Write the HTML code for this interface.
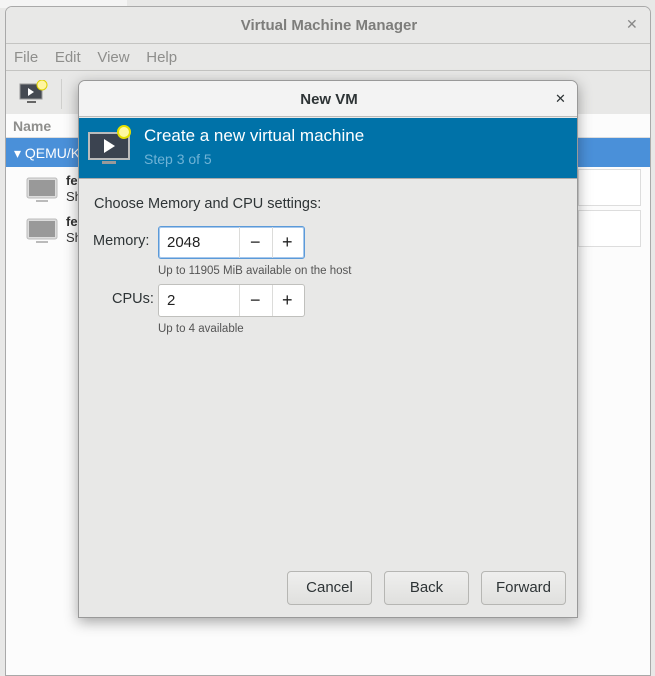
<!DOCTYPE html>
<html><head><style>
*{box-sizing:border-box;margin:0;padding:0}
body{width:655px;height:668px;position:relative;overflow:hidden;background:#e8e8e7;font-family:"Liberation Sans","DejaVu Sans",sans-serif;}
.abs{position:absolute}
#win{left:5px;top:6px;width:646px;height:670px;border:1px solid #a9a9a9;border-radius:7px 7px 0 0;background:#fcfcfc;overflow:hidden}
#dlg{left:78px;top:80px;width:500px;height:538px;background:#e8e8e7;border:1px solid #999;border-radius:7px 7px 0 0;box-shadow:0 4px 14px rgba(0,0,0,.35);overflow:hidden}
.btn{position:absolute;top:490px;width:85px;height:34px;border:1px solid #b6b6b3;border-radius:4px;background:linear-gradient(#efefee,#e0e0de);font-size:15px;color:#2e3436;text-align:center;line-height:32px}
.spin{position:absolute;left:79px;width:147px;height:33px;background:#fff;border:1px solid #c0c0bd;border-radius:3px;font-size:15px;color:#222}
.spin span{position:absolute;top:0;height:31px;line-height:31px}
.sep{position:absolute;top:0;width:1px;height:31px;background:#dcdcda}
</style></head><body>
<div class="abs" style="left:0;top:0;width:127px;height:8px;background:#f4f4f4"></div>
<div id="win" class="abs">
 <div class="abs" style="left:0;top:0;width:646px;height:37px;background:#e8e8e7;border-bottom:1px solid #c4c4c2;text-align:center;font-size:15px;font-weight:bold;color:#7d7d7b;line-height:38px">Virtual Machine Manager</div>
 <div class="abs" style="left:620px;top:9px;font-size:14px;color:#888">✕</div>
 <div class="abs" style="left:0;top:37px;width:646px;height:27px;background:#e8e8e7;border-bottom:1px solid #c4c4c2;font-size:15px;color:#8e8e8c;line-height:27px;padding-left:8px;word-spacing:12.5px">File Edit View Help</div>
 <div class="abs" style="left:0;top:64px;width:646px;height:43px;background:#e8e8e7"></div>
 <div class="abs" style="left:55px;top:72px;width:1px;height:30px;background:#cfcfcd"></div>
 <svg class="abs" style="left:12px;top:73px" width="30" height="28"><rect x="2" y="4" width="22" height="15" fill="#454a52" stroke="#999"/><rect x="9" y="21" width="9" height="2" fill="#666"/><path d="M10 8l6 4-6 4z" fill="#fff"/><circle cx="24" cy="5" r="5" fill="#fff5a0" stroke="#ddd000"/></svg>
 <div class="abs" style="left:0;top:107px;width:646px;height:24px;background:#fcfcfc;border-bottom:1px solid #ddd;font-size:14px;font-weight:bold;color:#8e8e8c;line-height:24px;padding-left:7px">Name</div>
 <div class="abs" style="left:0;top:131px;width:646px;height:29px;background:#4a90d9;color:#fff;font-size:14px;line-height:30px;padding-left:8px">▾ QEMU/KVM</div>
 <svg class="abs" style="left:20px;top:169px" width="34" height="30"><rect x="1" y="2" width="30" height="20" rx="2" fill="#ddd" stroke="#bbb"/><rect x="3" y="4" width="26" height="16" fill="#999"/><rect x="10" y="24" width="12" height="2" fill="#bbb"/></svg>
 <svg class="abs" style="left:20px;top:210px" width="34" height="30"><rect x="1" y="2" width="30" height="20" rx="2" fill="#ddd" stroke="#bbb"/><rect x="3" y="4" width="26" height="16" fill="#999"/><rect x="10" y="24" width="12" height="2" fill="#bbb"/></svg>
 <div class="abs" style="left:60px;top:166px;font-size:13px;line-height:16px;color:#333"><b>fedora</b><br>Shutoff</div>
 <div class="abs" style="left:60px;top:207px;font-size:13px;line-height:16px;color:#333"><b>fedora</b><br>Shutoff</div>
 <div class="abs" style="left:572px;top:162px;width:63px;height:37px;border:1px solid #ddd;background:#fff"></div>
 <div class="abs" style="left:572px;top:203px;width:63px;height:37px;border:1px solid #ddd;background:#fff"></div>
</div>
<div id="dlg" class="abs">
 <div class="abs" style="left:0;top:0;width:500px;height:36px;background:#f3f3f3;border-bottom:1px solid #bcbcba;text-align:center;font-size:15px;font-weight:bold;color:#2e3436;line-height:37px">New VM</div>
 <div class="abs" style="left:476px;top:10px;font-size:13px;font-weight:bold;color:#2e3436">✕</div>
 <div class="abs" style="left:0;top:37px;width:500px;height:61px;background:#0072a8;border-bottom:1px solid #aaa"></div>
 <svg class="abs" style="left:8px;top:44px" width="48" height="44"><rect x="2" y="8" width="40" height="26" fill="#3b4350" stroke="#bbb" stroke-width="2"/><rect x="15" y="36" width="14" height="3" fill="#999"/><path d="M17 14l11 7-11 7z" fill="#fff"/><circle cx="37" cy="7" r="6" fill="#fff8a0" stroke="#e5e000" stroke-width="2"/></svg>
 <div class="abs" style="left:65px;top:45px;font-size:17px;color:#fff">Create a new virtual machine</div>
 <div class="abs" style="left:65px;top:70px;font-size:14px;color:#6fb3d6">Step 3 of 5</div>
 <div class="abs" style="left:15px;top:115px;font-size:14.5px;color:#2e3436">Choose Memory and CPU settings:</div>
 <div class="abs" style="left:14px;top:152px;font-size:14.5px;color:#2e3436">Memory:</div>
 <div class="spin" style="top:145px;border-color:#5b9ad9;box-shadow:0 0 0 1px #a7c8ec inset"><span style="left:8px">2048</span><div class="sep" style="left:80px"></div><div class="sep" style="left:113px"></div><span style="left:91px;font-size:18px">−</span><span style="left:123px;font-size:18px">+</span></div>
 <div class="abs" style="left:79px;top:184px;font-size:11.5px;color:#555">Up to 11905 MiB available on the host</div>
 <div class="abs" style="left:33px;top:210px;font-size:14.5px;color:#2e3436">CPUs:</div>
 <div class="spin" style="top:203px"><span style="left:8px">2</span><div class="sep" style="left:80px"></div><div class="sep" style="left:113px"></div><span style="left:91px;font-size:18px">−</span><span style="left:123px;font-size:18px">+</span></div>
 <div class="abs" style="left:79px;top:242px;font-size:11.5px;color:#555">Up to 4 available</div>
 <div class="btn" style="left:208px">Cancel</div>
 <div class="btn" style="left:305px">Back</div>
 <div class="btn" style="left:402px">Forward</div>
</div>
</body></html>
